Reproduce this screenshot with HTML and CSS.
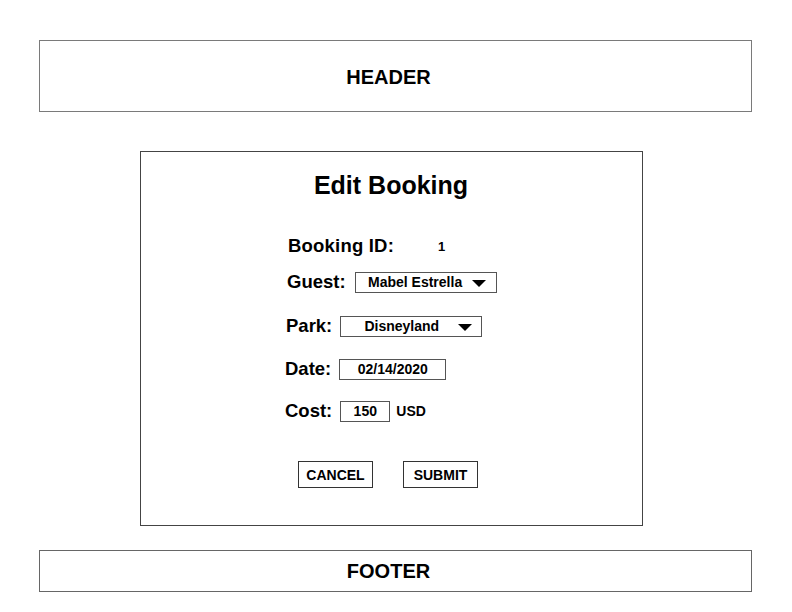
FILE: index.html
```html
<!DOCTYPE html>
<html>
<head>
<meta charset="utf-8">
<link rel="stylesheet" href="styles.css">
</head>
<body>
<div class="page">
  <header class="header">HEADER</header>
  <main class="card">
    <h1 class="title">Edit Booking</h1>
    <div class="form">
      <div class="row row-first">
        <span class="label">Booking ID:</span>
        <span class="value">1</span>
      </div>
      <div class="row row-guest">
        <span class="label">Guest:</span>
        <div class="select select-guest">
          <span class="select-text">Mabel Estrella</span>
          <span class="arrow"></span>
        </div>
      </div>
      <div class="row row-park">
        <span class="label">Park:</span>
        <div class="select select-park">
          <span class="select-text">Disneyland</span>
          <span class="arrow"></span>
        </div>
      </div>
      <div class="row row-date">
        <span class="label">Date:</span>
        <div class="field field-date">02/14/2020</div>
      </div>
      <div class="row row-cost">
        <span class="label">Cost:</span>
        <div class="field field-cost">150</div>
        <span class="unit">USD</span>
      </div>
    </div>
    <div class="actions">
      <div class="btn">CANCEL</div>
      <div class="btn">SUBMIT</div>
    </div>
  </main>
  <footer class="footer">FOOTER</footer>
</div>
</body>
</html>
```

FILE: styles.css
```css
* { box-sizing: border-box; }
html, body { margin: 0; padding: 0; background: #fff; }
body {
  font-family: "Liberation Sans", Arial, Helvetica, sans-serif;
  color: #000;
  width: 792px;
  height: 612px;
  overflow: hidden;
}
.page {
  padding-top: 40px;
  display: flex;
  flex-direction: column;
}
.header {
  margin-left: 39px;
  width: 713px;
  height: 72px;
  border: 1.5px solid #7a7a7a;
  display: flex;
  align-items: center;
  justify-content: center;
  font-weight: bold;
  font-size: 20px;
  padding-top: 2px;
  padding-right: 14px;
}
.card {
  margin-top: 39px;
  margin-left: 140px;
  width: 503px;
  height: 375px;
  border: 1px solid #444;
  padding-top: 18px;
  display: flex;
  flex-direction: column;
}
.title {
  margin: 0;
  font-size: 25px;
  line-height: 30px;
  font-weight: bold;
  text-align: center;
  padding-right: 1px;
}
.form {
  display: flex;
  flex-direction: column;
  padding-left: 145px;
  margin-top: 34px;
}
.row {
  display: flex;
  align-items: center;
  height: 24px;
  gap: 8px;
}
.row-guest { margin-top: 12px; padding-left: 1px; }
.row-park { margin-top: 20px; }
.row-date { margin-top: 19px; }
.row-cost { margin-top: 18px; }
.row-first { padding-left: 2px; }
.label {
  font-weight: bold;
  font-size: 18.5px;
}
.row-first .label { letter-spacing: 0.2px; }
.row-date .label, .row-cost .label { margin-left: -1px; }
.value {
  font-weight: bold;
  font-size: 13px;
  margin-left: 36px;
}
.select {
  height: 21px;
  border: 1px solid #555;
  display: flex;
  align-items: center;
  font-weight: bold;
  font-size: 14px;
  padding-right: 9px;
}
.select-guest { width: 142px; margin-left: 1px; padding-right: 10px; }
.select-park { width: 142px; }
.select-text {
  flex: 1;
  text-align: center;
}
.select-guest .select-text { padding-left: 7px; }
.select-park .select-text { padding-left: 16px; }
.arrow {
  width: 0;
  height: 0;
  border-left: 7px solid transparent;
  border-right: 7px solid transparent;
  border-top: 7px solid #000;
  margin-left: 4px;
  margin-top: 2px;
}
.select-park .arrow { margin-left: 12px; }
.field {
  height: 21px;
  border: 1px solid #555;
  display: flex;
  align-items: center;
  justify-content: center;
  font-weight: bold;
  font-size: 14px;
}
.field-date { width: 107px; }
.field-cost { width: 50px; }
.unit {
  font-weight: bold;
  font-size: 14px;
  margin-left: -2px;
}
.actions {
  display: flex;
  justify-content: center;
  gap: 30px;
  margin-top: 38px;
  padding-right: 7px;
}
.btn {
  width: 75px;
  height: 27px;
  border: 1.5px solid #333;
  display: flex;
  align-items: center;
  justify-content: center;
  font-weight: bold;
  font-size: 14px;
}
.footer {
  margin-top: 24px;
  margin-left: 39px;
  width: 713px;
  height: 42px;
  border: 1.5px solid #666;
  display: flex;
  align-items: center;
  justify-content: center;
  font-weight: bold;
  font-size: 20px;
  padding-right: 14px;
}
```
